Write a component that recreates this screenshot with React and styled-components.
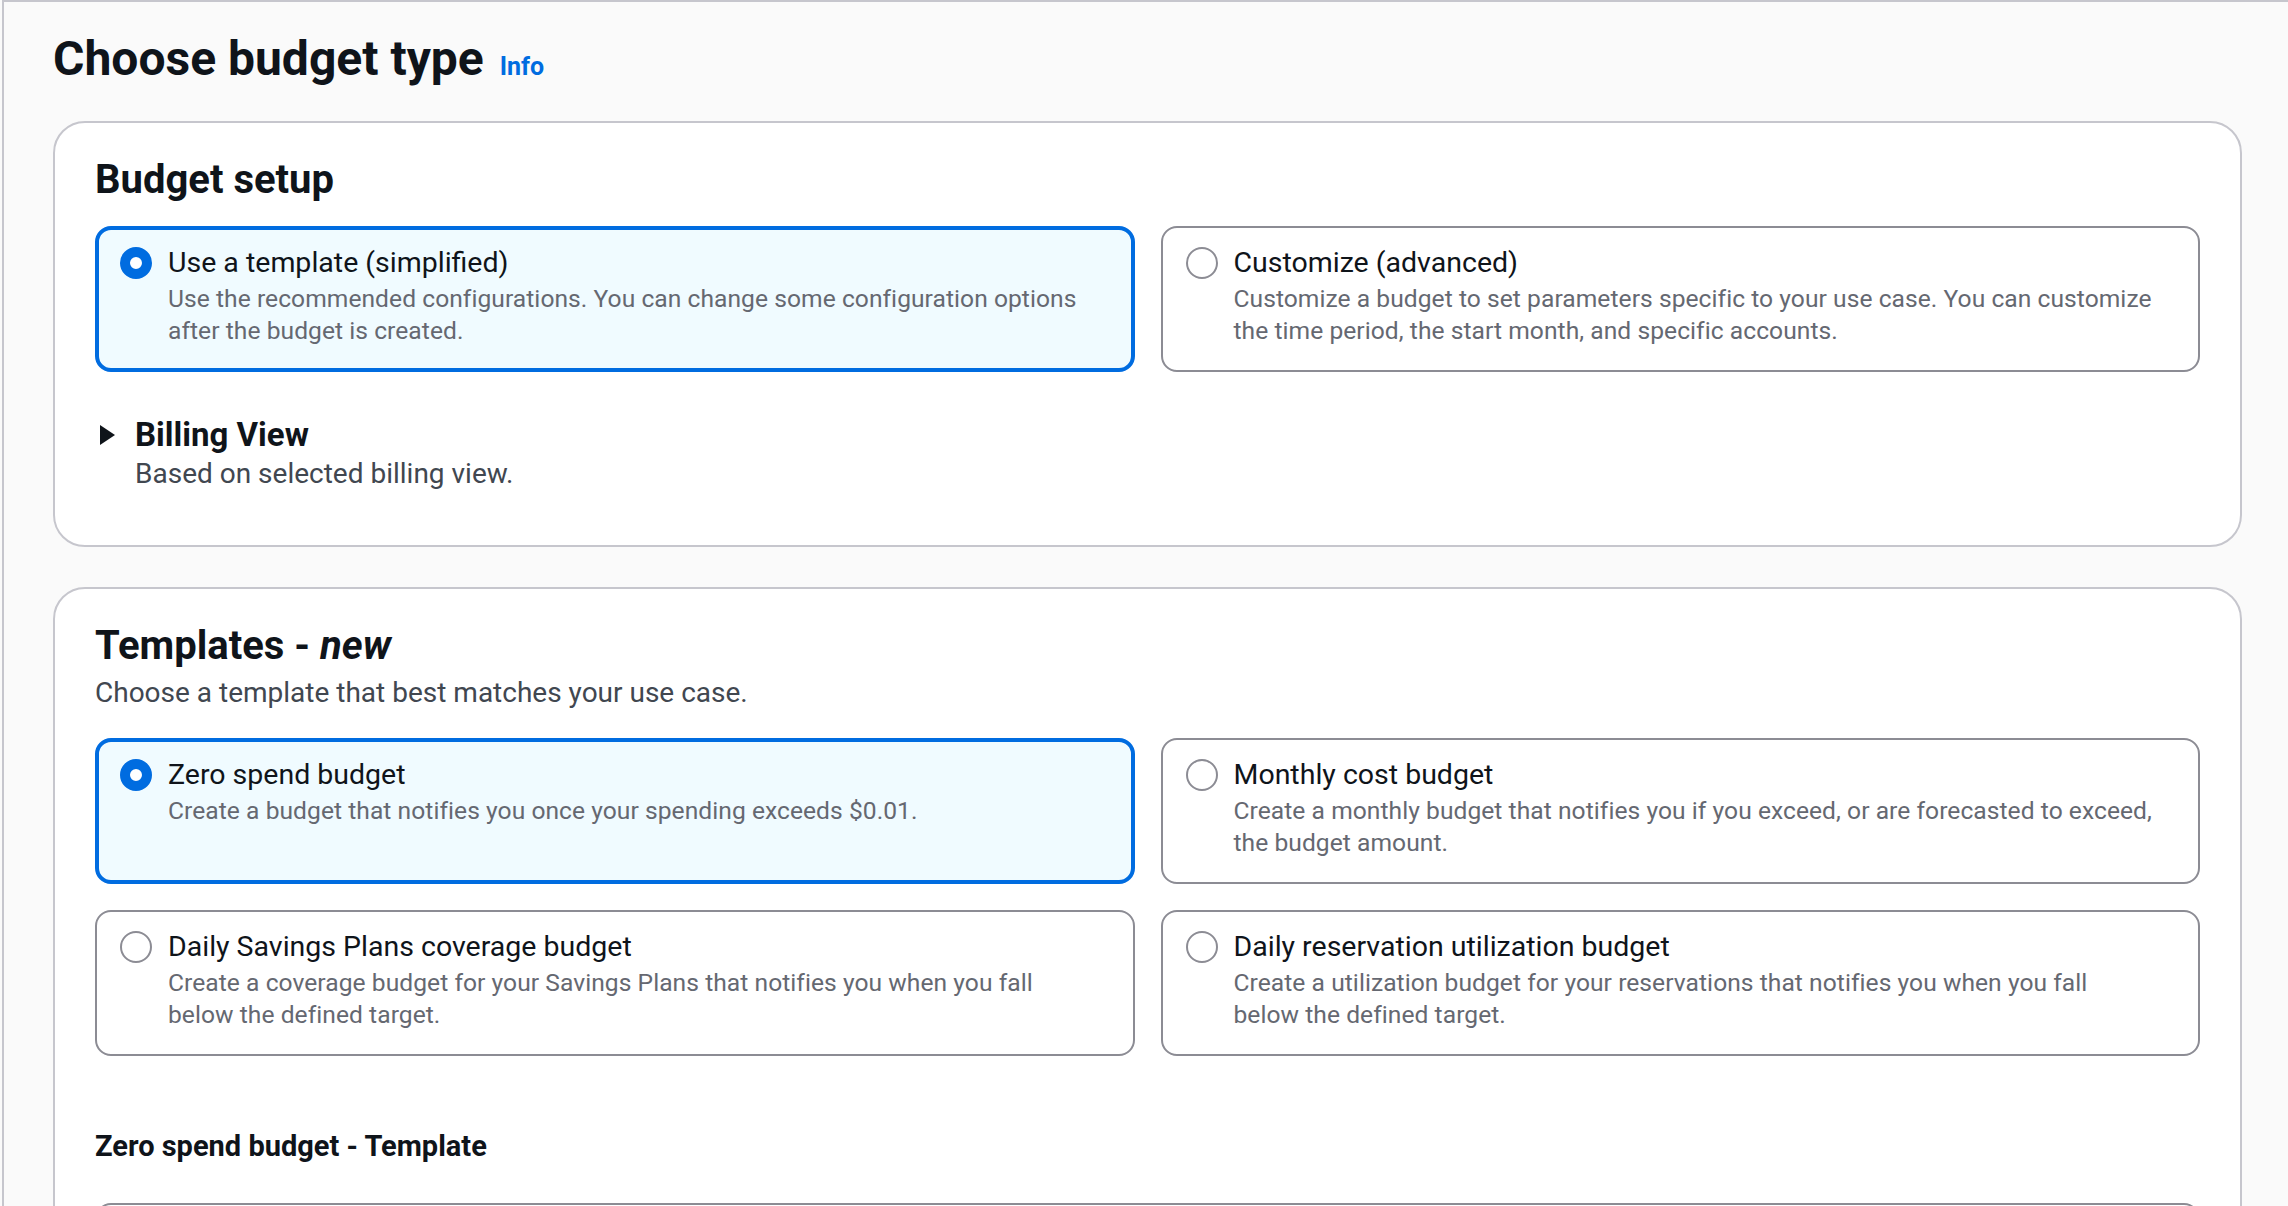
import React from 'react';
import styled, { createGlobalStyle, css } from 'styled-components';

const colors = {
    text: '#0f141a',
    secondary: '#656871',
    blue: '#006ce0',
    selectedBg: '#f0fbff',
    cardBorder: '#c6c6cd',
    tileBorder: '#8c8c94',
    page: '#fafafa',
};

const GlobalStyle = createGlobalStyle`
    html, body {
        margin: 0;
        padding: 0;
        background: ${colors.page};
        font-family: Roboto, "Liberation Sans", Arial, sans-serif;
        color: ${colors.text};
        overflow: hidden;
    }
    * {
        box-sizing: border-box;
    }
`;

const Page = styled.main`
    margin-left: 2px;
    border-left: 2px solid ${colors.cardBorder};
    border-top: 2px solid ${colors.cardBorder};
    padding: 27px 46px 0 49px;
    min-height: 1206px;
`;

const TitleRow = styled.div`
    display: flex;
    align-items: baseline;
    gap: 16px;
    margin-bottom: 32px;
`;

const Title = styled.h1`
    margin: 0;
    font-size: 48px;
    line-height: 60px;
    font-weight: 700;
`;

const InfoLink = styled.a`
    font-size: 25px;
    font-weight: 700;
    color: ${colors.blue};
    text-decoration: none;
    cursor: pointer;
`;

const Card = styled.section`
    background: #fff;
    border: 2px solid ${colors.cardBorder};
    border-radius: 32px;
    padding: 33px 40px ${p => p.$bottom ?? 51}px;
    & + & {
        margin-top: 40px;
    }
`;

const CardTitle = styled.h2`
    margin: 0;
    font-size: 40px;
    line-height: 48px;
    font-weight: 700;

    em {
        font-style: italic;
    }
`;

const CardDescription = styled.p`
    margin: 3px 0 0;
    font-size: 28px;
    line-height: 40px;
    color: #414750;
`;

const TileGrid = styled.div`
    display: grid;
    grid-template-columns: 1fr 1fr;
    gap: 26px;
    margin-top: ${p => p.$top}px;
`;

const Tile = styled.label`
    display: flex;
    gap: 16px;
    min-height: 146px;
    border-radius: 16px;
    cursor: pointer;
    ${p =>
        p.$selected
            ? css`
                  border: 4px solid ${colors.blue};
                  background: ${colors.selectedBg};
                  padding: 13px 40px 21px 21px;
              `
            : css`
                  border: 2px solid ${colors.tileBorder};
                  background: #fff;
                  padding: 15px 42px 23px 23px;
              `}
`;

const RadioMark = styled.span`
    flex: none;
    width: 32px;
    height: 32px;
    margin-top: 4px;
    border-radius: 50%;
    background: #fff;
    ${p =>
        p.$checked
            ? css`
                  border: 10px solid ${colors.blue};
              `
            : css`
                  border: 2px solid ${colors.tileBorder};
              `}
`;

const TileBody = styled.div`
    display: flex;
    flex-direction: column;
`;

const TileLabel = styled.span`
    font-size: 28.5px;
    line-height: 40px;
    color: ${colors.text};
`;

const TileText = styled.span`
    font-size: 24.6px;
    line-height: 32px;
    letter-spacing: 0.05px;
    color: ${colors.secondary};
`;

const Expandable = styled.div`
    margin-top: 45px;
    display: grid;
    grid-template-columns: 40px 1fr;
`;

const Caret = styled.svg`
    width: 17px;
    height: 22px;
    margin: 7px 0 0 4px;
`;

const ExpandTitle = styled.div`
    font-size: 33px;
    line-height: 36px;
    font-weight: 700;
`;

const ExpandText = styled.div`
    grid-column: 2;
    margin-top: 1px;
    font-size: 28px;
    line-height: 40px;
    color: #414750;
`;

const SectionHeading = styled.h3`
    margin: 70px 0 0;
    font-size: 29px;
    line-height: 40px;
    font-weight: 700;
`;

const TablePreview = styled.div`
    margin-top: 37px;
    height: 200px;
    border: 2px solid ${colors.tileBorder};
    border-radius: 16px;
`;

function RadioTile({ checked, label, description }) {
    return (
        <Tile $selected={checked}>
            <RadioMark $checked={checked} />
            <TileBody>
                <TileLabel>{label}</TileLabel>
                <TileText>{description}</TileText>
            </TileBody>
        </Tile>
    );
}

const setupOptions = [
    {
        key: 'template',
        label: 'Use a template (simplified)',
        description:
            'Use the recommended configurations. You can change some configuration options after the budget is created.',
    },
    {
        key: 'custom',
        label: 'Customize (advanced)',
        description:
            'Customize a budget to set parameters specific to your use case. You can customize the time period, the start month, and specific accounts.',
    },
];

const templates = [
    {
        key: 'zero',
        label: 'Zero spend budget',
        description: 'Create a budget that notifies you once your spending exceeds $0.01.',
    },
    {
        key: 'monthly',
        label: 'Monthly cost budget',
        description:
            'Create a monthly budget that notifies you if you exceed, or are forecasted to exceed, the budget amount.',
    },
    {
        key: 'savings',
        label: 'Daily Savings Plans coverage budget',
        description:
            'Create a coverage budget for your Savings Plans that notifies you when you fall below the defined target.',
    },
    {
        key: 'reservation',
        label: 'Daily reservation utilization budget',
        description:
            'Create a utilization budget for your reservations that notifies you when you fall below the defined target.',
    },
];

export default function App() {
    const setupType = 'template';
    const template = 'zero';
    return (
        <>
            <GlobalStyle />
            <Page>
                <TitleRow>
                    <Title>Choose budget type</Title>
                    <InfoLink>Info</InfoLink>
                </TitleRow>

                <Card>
                    <CardTitle>Budget setup</CardTitle>
                    <TileGrid $top={22}>
                        {setupOptions.map(o => (
                            <RadioTile
                                key={o.key}
                                checked={o.key === setupType}
                                label={o.label}
                                description={o.description}
                            />
                        ))}
                    </TileGrid>
                    <Expandable>
                        <Caret viewBox="0 0 17 22">
                            <path d="M1 1 L16 11 L1 21 Z" fill={colors.text} />
                        </Caret>
                        <ExpandTitle>Billing View</ExpandTitle>
                        <ExpandText>Based on selected billing view.</ExpandText>
                    </Expandable>
                </Card>

                <Card $bottom={0}>
                    <CardTitle>
                        Templates - <em>new</em>
                    </CardTitle>
                    <CardDescription>Choose a template that best matches your use case.</CardDescription>
                    <TileGrid $top={25}>
                        {templates.map(t => (
                            <RadioTile
                                key={t.key}
                                checked={t.key === template}
                                label={t.label}
                                description={t.description}
                            />
                        ))}
                    </TileGrid>
                    <SectionHeading>Zero spend budget - Template</SectionHeading>
                    <TablePreview />
                </Card>
            </Page>
        </>
    );
}
